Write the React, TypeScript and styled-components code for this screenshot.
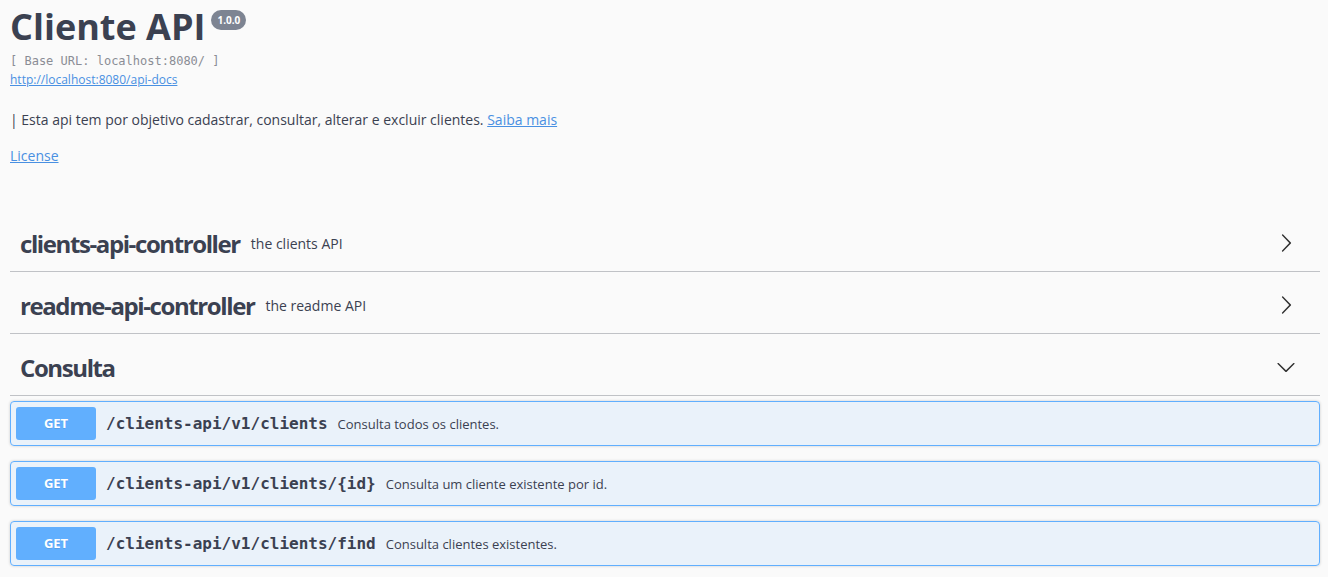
import React from "react";
import styled, { createGlobalStyle } from "styled-components";

const GlobalStyle = createGlobalStyle`
  html, body { margin: 0; padding: 0; }
  body {
    background: #fafafa;
    font-family: "Open Sans", "Noto Sans", sans-serif;
    color: #3b4151;
  }
`;

const Page = styled.div`
  padding: 0 8px 0 10px;
`;

const Info = styled.section`
  display: flex;
  flex-direction: column;
  align-items: flex-start;
`;

const Title = styled.h2`
  display: flex;
  align-items: flex-start;
  margin: 2px 0 0;
  font-size: 36px;
  font-weight: 700;
  line-height: 49px;
  color: #3b4151;
`;

const Version = styled.span`
  margin: 8px 0 0 6px;
  height: 20px;
  padding: 0 6px;
  border-radius: 57px;
  background: #7d8492;
  color: #fff;
  font-size: 10px;
  font-weight: 700;
  line-height: 20px;
`;

const BaseUrl = styled.pre`
  margin: 2px 0 0;
  font-family: "DejaVu Sans Mono", monospace;
  font-size: 12px;
  line-height: 16px;
  color: #8a8d95;
`;

const Link = styled.a<{ $size?: number }>`
  color: #4990e2;
  text-decoration: underline;
  font-size: ${(p) => p.$size ?? 14}px;
`;

const UrlLine = styled.div`
  margin-top: 3px;
  font-size: 12px;
  line-height: 16px;
`;

const Description = styled.p`
  margin: 22px 0 0;
  font-size: 14px;
  line-height: 19px;
  color: #3b4151;
`;

const LicenseLine = styled.div`
  margin-top: 17px;
  font-size: 14px;
  line-height: 19px;
`;

const Tags = styled.div`
  margin-top: 50px;
`;

const TagHeader = styled.h3`
  box-sizing: border-box;
  display: flex;
  align-items: center;
  height: 57px;
  margin: 0 0 5px;
  padding: 0 24px 0 10px;
  border-bottom: 1px solid rgba(59, 65, 81, 0.3);
  font-size: 24px;
  font-weight: 700;
  color: #3b4151;
`;

const TagName = styled.span`
  letter-spacing: -1.4px;
`;

const TagDesc = styled.small`
  flex: 1;
  padding: 0 11px;
  font-size: 14px;
  font-weight: 400;
`;

const Arrow = styled.svg`
  width: 20px;
  height: 20px;
  fill: #303030;
  flex: none;
`;

const OpBlock = styled.div`
  box-sizing: border-box;
  display: flex;
  align-items: center;
  height: 45px;
  margin: 0 0 15px;
  padding: 5px;
  border: 1px solid #61affe;
  border-radius: 4px;
  background: rgba(97, 175, 254, 0.1);
  box-shadow: 0 0 3px rgba(0, 0, 0, 0.19);
`;

const Method = styled.span`
  box-sizing: border-box;
  width: 80px;
  height: 33px;
  border-radius: 3px;
  background: #61affe;
  color: #fff;
  font-size: 13px;
  font-weight: 700;
  line-height: 33px;
  text-align: center;
  text-shadow: 0 1px 0 rgba(0, 0, 0, 0.1);
`;

const Path = styled.span`
  padding: 0 10px;
  font-family: "DejaVu Sans Mono", monospace;
  font-size: 16px;
  font-weight: 700;
  color: #3b4151;
`;

const OpDesc = styled.span`
  font-size: 13px;
  color: #3b4151;
`;

const RightArrow = () => (
  <Arrow viewBox="0 0 20 20">
    <path d="M13.25 10L6.109 2.58a.697.697 0 0 1 0-.979.68.68 0 0 1 .969 0l7.83 7.908a.697.697 0 0 1 0 .979l-7.83 7.908a.68.68 0 0 1-.969 0 .697.697 0 0 1 0-.979L13.25 10z" />
  </Arrow>
);

const DownArrow = () => (
  <Arrow viewBox="0 0 20 20">
    <path d="M17.418 6.109c.272-.268.709-.268.979 0s.27.701 0 .969l-7.908 7.83c-.27.268-.707.268-.979 0l-7.908-7.830c-.27-.268-.27-.701 0-.969.271-.268.709-.268.979 0L10 13.25l7.418-7.141z" />
  </Arrow>
);

const tags = [
  { name: "clients-api-controller", desc: "the clients API", open: false },
  { name: "readme-api-controller", desc: "the readme API", open: false },
  { name: "Consulta", desc: "", open: true },
];

const ops = [
  { path: "/clients-api/v1/clients", desc: "Consulta todos os clientes." },
  { path: "/clients-api/v1/clients/{id}", desc: "Consulta um cliente existente por id." },
  { path: "/clients-api/v1/clients/find", desc: "Consulta clientes existentes." },
];

export default function App() {
  return (
    <Page>
      <GlobalStyle />
      <Info>
        <Title>
          Cliente API
          <Version>1.0.0</Version>
        </Title>
        <BaseUrl>[ Base URL: localhost:8080/ ]</BaseUrl>
        <UrlLine>
          <Link href="#" $size={12}>http://localhost:8080/api-docs</Link>
        </UrlLine>
        <Description>
          | Esta api tem por objetivo cadastrar, consultar, alterar e excluir clientes.{" "}
          <Link href="#">Saiba mais</Link>
        </Description>
        <LicenseLine>
          <Link href="#">License</Link>
        </LicenseLine>
      </Info>
      <Tags>
        {tags.map((t) => (
          <TagHeader key={t.name}>
            <TagName>{t.name}</TagName>
            <TagDesc>{t.desc}</TagDesc>
            {t.open ? <DownArrow /> : <RightArrow />}
          </TagHeader>
        ))}
        {ops.map((o) => (
          <OpBlock key={o.path}>
            <Method>GET</Method>
            <Path>{o.path}</Path>
            <OpDesc>{o.desc}</OpDesc>
          </OpBlock>
        ))}
      </Tags>
    </Page>
  );
}
